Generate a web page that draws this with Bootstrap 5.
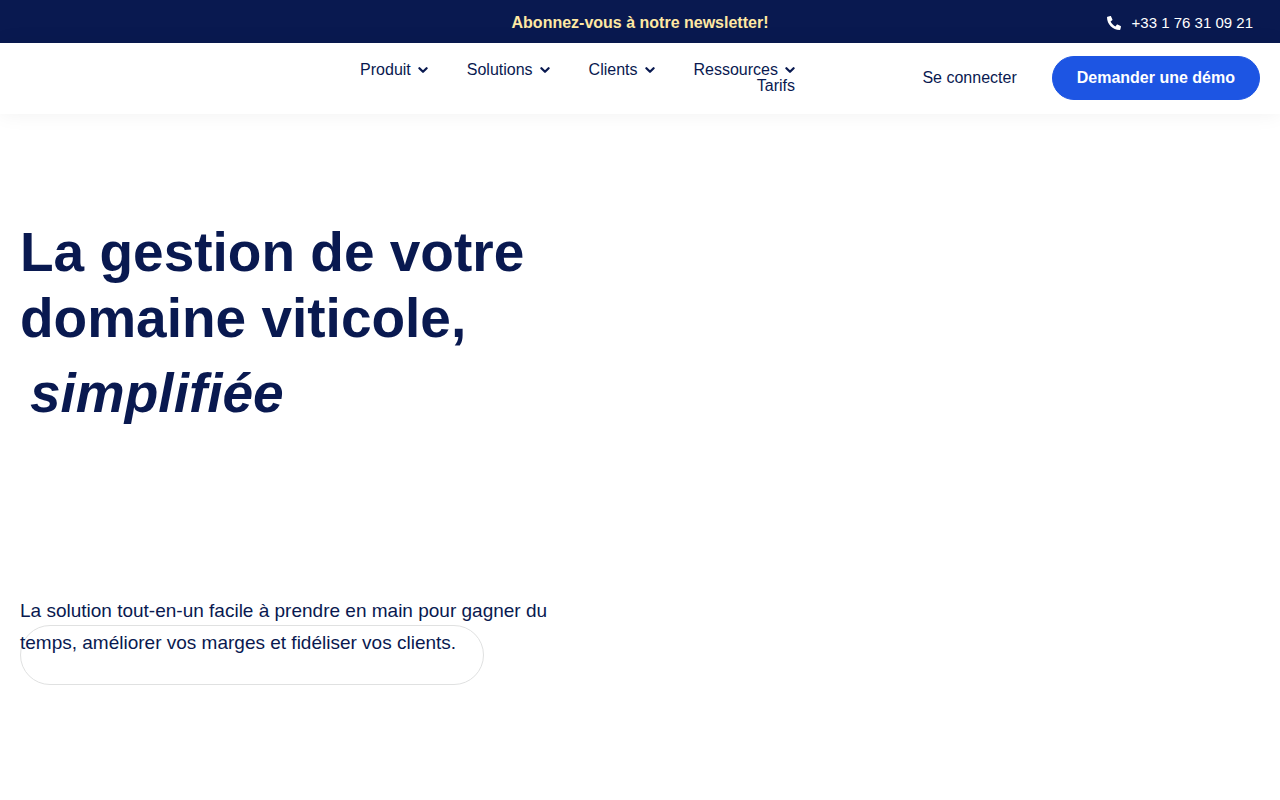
<!DOCTYPE html>
<html lang="fr">
<head>
<meta charset="utf-8">
<meta name="viewport" content="width=device-width, initial-scale=1">
<title>La gestion de votre domaine viticole, simplifiée</title>
<link rel="stylesheet" href="https://cdn.jsdelivr.net/npm/bootstrap@5.3.0/dist/css/bootstrap.min.css">
<style>
:root { --navy: #091950; --blue: #1d55e3; --cream: #ffe8a3; }
body { font-family: "Liberation Sans", Arial, sans-serif; color: var(--navy); background: #fff; }
a { color: inherit; text-decoration: none; }
.topbar { background: var(--navy); padding: 11px 20px 8px; }
.topbar-news { color: var(--cream); font-weight: 700; }
.topbar-phone { font-size: 15px; padding-right: 7px; gap: 11px; }
.site-header { padding: 13px 20px 14px; box-shadow: 0 0 20px rgba(0, 0, 0, .06); }
.main-nav { padding-left: 25px; }
.main-menu { line-height: 16px; column-gap: 39px; max-width: 440px; }
.menu-link { gap: 7px; }
.chevron { width: 10px; height: 12px; fill: none; stroke: currentColor; stroke-width: 2.2; stroke-linecap: round; stroke-linejoin: round; }
.header-actions { gap: 35px; }
.demo-btn { --bs-btn-color: #fff; --bs-btn-bg: var(--blue); --bs-btn-border-color: var(--blue);
  --bs-btn-hover-color: #fff; --bs-btn-hover-bg: #1747c2; --bs-btn-hover-border-color: #1747c2;
  --bs-btn-padding-x: 24px; --bs-btn-padding-y: 9px; --bs-btn-font-weight: 700; }
.hero { padding: 105px 20px 0; }
.hero-copy { max-width: 560px; }
.hero-title { font-size: 55px; line-height: 66px; font-weight: 700; }
.hero-accent { font-style: italic; padding: 9px 10px 0; }
.hero-lead { font-size: 19px; line-height: 32px; margin-top: 169px; }
.email-field { max-width: 464px; height: 60px; margin-top: -34px; background: transparent; border: 1px solid #e0e1e1; }
</style>
</head>
<body>
<div class="topbar">
  <div class="row g-0 align-items-center">
    <div class="col-lg-4 offset-lg-4 text-center"><a class="topbar-news" href="#newsletter">Abonnez-vous à notre newsletter!</a></div>
    <div class="col-lg-4 d-flex justify-content-end">
      <a class="topbar-phone d-flex align-items-center text-white" href="tel:+33176310921">
        <svg width="14" height="14" viewBox="0 0 512 512" fill="currentColor" aria-hidden="true"><path d="M493.400 24.600l-104-24c-11.300-2.600-22.900 3.300-27.500 13.900l-48 112c-4.200 9.800-1.400 21.300 6.900 28l60.600 49.600c-36 76.700-98.900 140.500-177.200 177.200l-49.600-60.600c-6.800-8.300-18.200-11.100-28-6.900l-112 48C3.900 366.500-2 378.100.600 389.400l24 104C27.100 504.200 36.700 512 48 512c256.100 0 464-207.500 464-464 0-11.200-7.700-20.900-18.600-23.400z" transform="matrix(-1 0 0 1 512 0)"/></svg>
        <span>+33 1 76 31 09 21</span>
      </a>
    </div>
  </div>
</div>
<header class="site-header position-relative">
  <div class="row g-0 align-items-center">
    <nav class="main-nav col-lg-5 offset-lg-3 d-flex" aria-label="Menu principal">
      <ul class="main-menu list-unstyled d-flex flex-wrap justify-content-end mb-0">
        <li><a class="menu-link d-flex align-items-center" href="#produit">Produit <svg class="chevron" viewBox="0 0 10 12" aria-hidden="true"><path d="M1.400 4.200L5 7.800l3.600-3.600"/></svg></a></li>
        <li><a class="menu-link d-flex align-items-center" href="#solutions">Solutions <svg class="chevron" viewBox="0 0 10 12" aria-hidden="true"><path d="M1.400 4.200L5 7.800l3.600-3.600"/></svg></a></li>
        <li><a class="menu-link d-flex align-items-center" href="#clients">Clients <svg class="chevron" viewBox="0 0 10 12" aria-hidden="true"><path d="M1.400 4.200L5 7.800l3.600-3.600"/></svg></a></li>
        <li><a class="menu-link d-flex align-items-center" href="#ressources">Ressources <svg class="chevron" viewBox="0 0 10 12" aria-hidden="true"><path d="M1.400 4.200L5 7.800l3.600-3.600"/></svg></a></li>
        <li><a href="#tarifs">Tarifs</a></li>
      </ul>
    </nav>
    <div class="header-actions col-lg-4 d-flex align-items-center justify-content-end">
      <a href="#connexion">Se connecter</a>
      <button type="button" class="btn demo-btn rounded-pill">Demander une démo</button>
    </div>
  </div>
</header>
<main class="hero">
  <div class="hero-copy">
    <h1 class="hero-title mb-0">La gestion de votre domaine viticole, <span class="hero-accent d-block">simplifiée</span></h1>
    <p class="hero-lead mb-0">La solution tout-en-un facile à prendre en main pour gagner du temps, améliorer vos marges et fidéliser vos clients.</p>
    <input type="email" class="email-field form-control rounded-pill px-4" aria-label="Adresse e-mail">
  </div>
</main>
<script src="https://cdn.jsdelivr.net/npm/bootstrap@5.3.0/dist/js/bootstrap.bundle.min.js"></script>
</body>
</html>
